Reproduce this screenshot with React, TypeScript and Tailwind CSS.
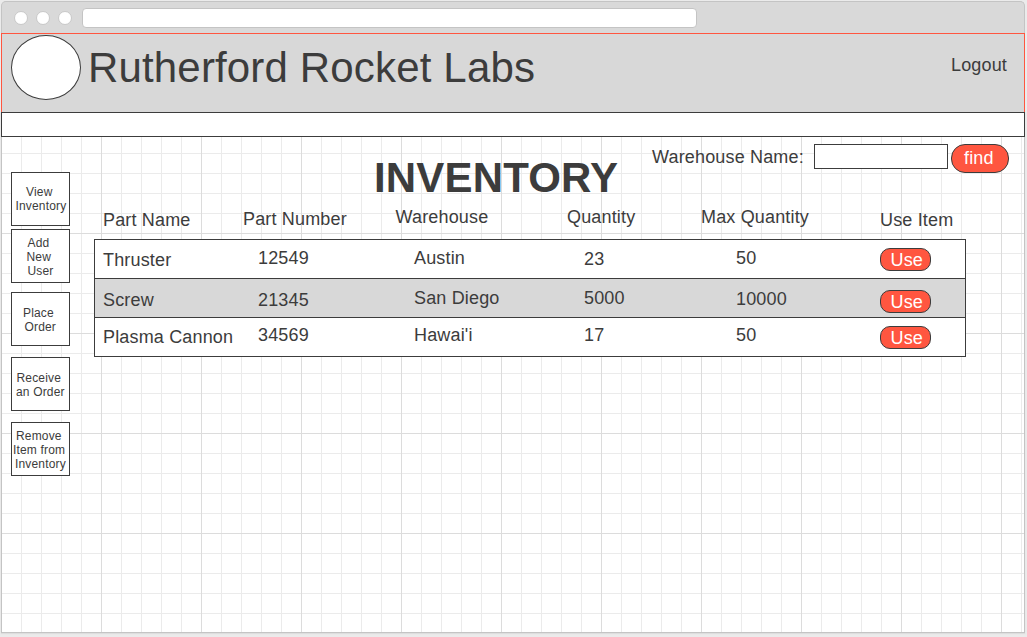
const GRID =
  'bg-[linear-gradient(to_right,#dcdcdc_1px,transparent_1px),linear-gradient(to_bottom,#dcdcdc_1px,transparent_1px),linear-gradient(to_right,#ebebeb_1px,transparent_1px),linear-gradient(to_bottom,#ebebeb_1px,transparent_1px)] bg-[size:100px_100px,100px_100px,20px_20px,20px_20px] bg-[position:-1px_0px,0px_96px,-1px_0px,0px_16px]';

const menu = [
  { gap: 'mt-[35px]', pad: 'pt-[12px]', lines: [['View', 'pl-[14px]'], ['Inventory', 'pl-[3.5px]']] },
  { gap: 'mt-[3px]', pad: 'pt-[6px]', lines: [['Add', 'pl-[15.5px]'], ['New', 'pl-[14.5px]'], ['User', 'pl-[15.5px]']] },
  { gap: 'mt-[9px]', pad: 'pt-[13px]', lines: [['Place', 'pl-[11px]'], ['Order', 'pl-[12.5px]']] },
  { gap: 'mt-[11px]', pad: 'pt-[13px]', lines: [['Receive', 'pl-[4.5px]'], ['an Order', 'pl-[4px]']] },
  { gap: 'mt-[11px]', pad: 'pt-[6px]', lines: [['Remove', 'pl-[4px]'], ['Item from', 'pl-[1px]'], ['Inventory', 'pl-[3px]']] },
];

const headings = [
  { text: 'Part Name', cls: 'w-[140px] pt-[3px]' },
  { text: 'Part Number', cls: 'w-[152px] pt-[2px]' },
  { text: 'Warehouse', cls: 'w-[172px] pl-[0.5px]' },
  { text: 'Quantity', cls: 'w-[134px]' },
  { text: 'Max Quantity', cls: 'w-[179px]' },
  { text: 'Use Item', cls: 'pt-[3px]' },
];

const rows = [
  {
    cells: ['Thruster', '12549', 'Austin', '23', '50'],
    tops: ['pt-[10px]', 'pt-[8px]', 'pt-[8px]', 'pt-[9px]', 'pt-[8px]'],
    button: 'mt-[8px]',
    fill: 'bg-white',
  },
  {
    cells: ['Screw', '21345', 'San Diego', '5000', '10000'],
    tops: ['pt-[11px]', 'pt-[11px]', 'pt-[9px]', 'pt-[9px]', 'pt-[10px]'],
    button: 'mt-[11px]',
    fill: 'bg-[#d8d8d8]',
  },
  {
    cells: ['Plasma Cannon', '34569', "Hawai'i", '17', '50'],
    tops: ['pt-[9px]', 'pt-[7px]', 'pt-[7px]', 'pt-[7px]', 'pt-[7px]'],
    button: 'mt-[8px]',
    fill: 'bg-white',
  },
];

const columns = ['w-[155px]', 'w-[156px]', 'w-[170px]', 'w-[152px]', 'w-[144px]'];

function BrowserBar() {
  return (
    <div className="flex h-[32px] rounded-t-[5px] border border-b-0 border-[#c4c4c4] bg-[#d9d9d9] pl-[12px] pt-[6px]">
      <div className="mt-[3px] flex gap-[8px]">
        {[0, 1, 2].map((i) => (
          <span key={i} className="size-[14px] rounded-full border border-[#c8c8c8] bg-white" />
        ))}
      </div>
      <div className="ml-[10px] h-[20px] w-[615px] rounded-[4px] border border-[#c4c4c4] bg-white" />
    </div>
  );
}

function Sidebar() {
  return (
    <nav className="flex w-[59px] flex-col text-[12px] leading-[14px] tracking-[0.17px]">
      {menu.map((item, i) => (
        <button
          key={i}
          className={`${item.gap} ${item.pad} flex h-[54px] w-[59px] flex-col items-start whitespace-nowrap border border-[#3c3c3c] bg-white`}
        >
          {item.lines.map(([text, pad]) => (
            <span key={text} className={pad}>
              {text}
            </span>
          ))}
        </button>
      ))}
    </nav>
  );
}

function InventoryTable() {
  return (
    <section>
      <div className="flex h-[32px] pl-[9px]">
        {headings.map((h) => (
          <span key={h.text} className={`${h.cls} shrink-0 whitespace-nowrap`}>
            {h.text}
          </span>
        ))}
      </div>
      <div className="w-[872px] border border-b-0 border-[#3c3c3c]">
        {rows.map((row) => (
          <div key={row.cells[0]} className={`${row.fill} flex h-[39px] border-b border-[#3c3c3c] pl-[8px]`}>
            {row.cells.map((cell, i) => (
              <span key={i} className={`${columns[i]} ${row.tops[i]} shrink-0 whitespace-nowrap`}>
                {cell}
              </span>
            ))}
            <button
              className={`${row.button} flex h-[23px] w-[51px] shrink-0 rounded-[10px] border border-[#3c3c3c] bg-[#ff5640] pl-[9.5px] pt-px text-white`}
            >
              Use
            </button>
          </div>
        ))}
      </div>
    </section>
  );
}

export default function App() {
  return (
    <div className="h-[637px] w-[1027px] overflow-hidden bg-[#ebebeb] pl-px pt-px font-['Liberation_Sans',Arial,sans-serif] text-[18px] leading-[20px] tracking-[0.16px] text-[#3c3c3c]">
      <div className="w-[1024px]">
        <BrowserBar />
        <header className="flex h-[79px] border border-b-0 border-[#ff5640] bg-[#d8d8d8] pl-[9px] pt-px">
          <div className="h-[65px] w-[70px] rounded-[50%] border border-[#3c3c3c] bg-white" />
          <h1 className="ml-[7px] mt-[9px] whitespace-nowrap text-[42px] leading-[48px]">Rutherford Rocket Labs</h1>
          <a className="ml-auto mr-[17px] mt-[20px] h-[20px]">Logout</a>
        </header>
        <div className="h-[25px] border border-[#3c3c3c] bg-white" />
        <main className="flex h-[496px] border border-t-0 border-[#c4c4c4] bg-white shadow-[0_1px_1px_#dedede]">
          <div className={`${GRID} flex w-full pl-[9px]`}>
            <Sidebar />
            <div className="ml-[24px] flex-1">
              <div className="flex h-[70px]">
                <h2 className="ml-[280px] mt-[17px] w-[278px] whitespace-nowrap text-[42px] font-bold leading-[48px]">
                  INVENTORY
                </h2>
                <label className="mt-[10px] w-[162px] whitespace-nowrap">Warehouse Name:</label>
                <div className="mt-[7px] h-[25px] w-[134px] border border-[#3c3c3c] bg-white" />
                <button className="ml-[3px] mt-[7px] flex h-[29px] w-[58px] rounded-[14px] border border-[#3c3c3c] bg-[#ff5640] pl-[12px] pt-[3px] text-white">
                  find
                </button>
              </div>
              <InventoryTable />
            </div>
          </div>
        </main>
      </div>
    </div>
  );
}
